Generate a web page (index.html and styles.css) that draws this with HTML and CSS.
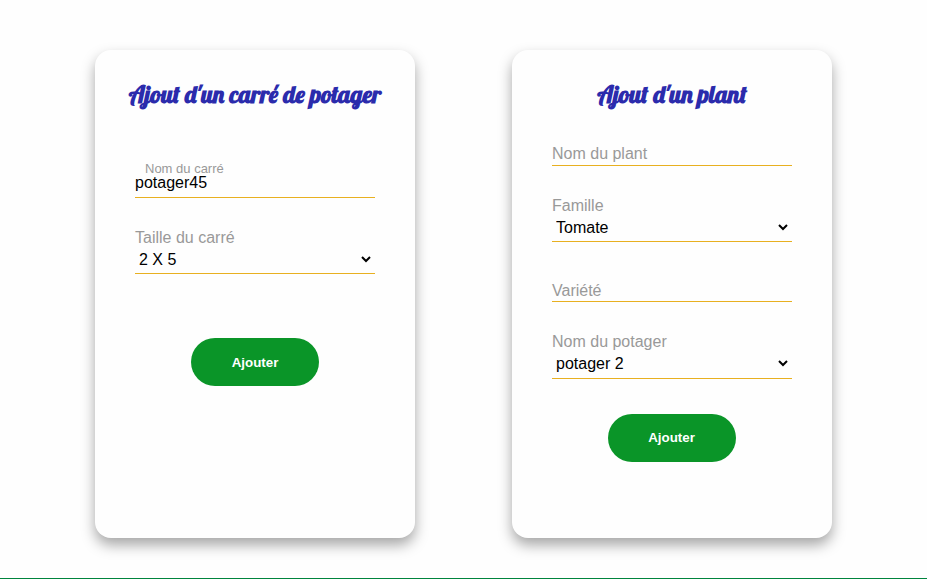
FILE: index.html
```html
<!DOCTYPE html>
<html lang="fr">
<head>
<meta charset="utf-8">
<title>Potager</title>
<link rel="stylesheet" href="styles.css">
</head>
<body>
<main class="forms">
  <form class="card">
    <h2 class="title">Ajout d'un carré de potager</h2>
    <div class="field field-filled">
      <label class="floating" for="plot">Nom du carré</label>
      <input id="plot" class="control" type="text" value="potager45" spellcheck="false">
    </div>
    <div class="field field-select">
      <label for="size">Taille du carré</label>
      <select id="size" class="control"><option>2 X 5</option></select>
    </div>
    <button class="submit submit-plot" type="button">Ajouter</button>
  </form>
  <form class="card">
    <h2 class="title">Ajout d'un plant</h2>
    <div class="field field-empty">
      <label for="plant">Nom du plant</label>
      <input id="plant" class="control control-empty" type="text">
    </div>
    <div class="field field-select">
      <label for="family">Famille</label>
      <select id="family" class="control"><option>Tomate</option></select>
    </div>
    <div class="field field-variety">
      <label for="variety">Variété</label>
      <input id="variety" class="control control-empty" type="text">
    </div>
    <div class="field field-select field-garden">
      <label for="garden">Nom du potager</label>
      <select id="garden" class="control"><option>potager 2</option></select>
    </div>
    <button class="submit submit-plant" type="button">Ajouter</button>
  </form>
</main>
<footer class="footer"></footer>
</body>
</html>
```
FILE: styles.css
```css
* { box-sizing: border-box; }
body {
  margin: 0;
  height: 579px;
  overflow: hidden;
  display: flex;
  flex-direction: column;
  background: #fefefe;
  font: 16px/18px "Liberation Sans", Arial, sans-serif;
}
.forms {
  flex: 1;
  display: flex;
  align-items: flex-start;
  justify-content: center;
  gap: 97px;
  padding-top: 50px;
}
.card {
  width: 320px;
  height: 488px;
  padding: 29px 40px;
  display: flex;
  flex-direction: column;
  border-radius: 16px;
  background: #fefefe;
  box-shadow: 0 7px 14px rgba(0, 0, 0, 0.35);
}
.title {
  align-self: center;
  margin: 0 0 1px;
  height: 30px;
  color: #2b2bac;
  font: bold 24px/30px Lobster, cursive;
  white-space: nowrap;
}
.field {
  display: flex;
  flex-direction: column;
  margin-top: 30px;
  border-bottom: 1px solid #e8b020;
}
.field label { color: #999; }
.control {
  width: 100%;
  height: 19px;
  margin: 0;
  padding: 0;
  border: 0;
  outline: 0;
  background: transparent;
  color: #000;
  font: inherit;
}
.field-select {
  margin-top: 31px;
  padding-bottom: 4px;
}
.field-select .control {
  width: 239px;
  margin-top: 3px;
}
.field-empty { margin-top: 35px; }
.control-empty { height: 2px; }
.field-variety { margin-top: 40px; }
.field-variety .control { height: 1px; }
.field-garden { margin-top: 31px; padding-bottom: 5px; }
.field-filled { margin-top: 51px; padding-bottom: 5px; }
.field-filled .floating {
  padding-left: 10px;
  font-size: 13px;
  line-height: 15px;
}
.field-filled .control { margin-top: -3px; }
.submit {
  align-self: center;
  width: 128px;
  height: 48px;
  margin-top: 35px;
  padding: 0;
  border: 0;
  border-radius: 24px;
  background: #0a9528;
  color: #fff;
  font: bold 13.333px "Liberation Sans", Arial, sans-serif;
}
.submit-plot { margin-top: 64px; }
.submit-plant { padding: 0 1px 2px 0; }
.footer { height: 1px; background: #00843d; }
```
